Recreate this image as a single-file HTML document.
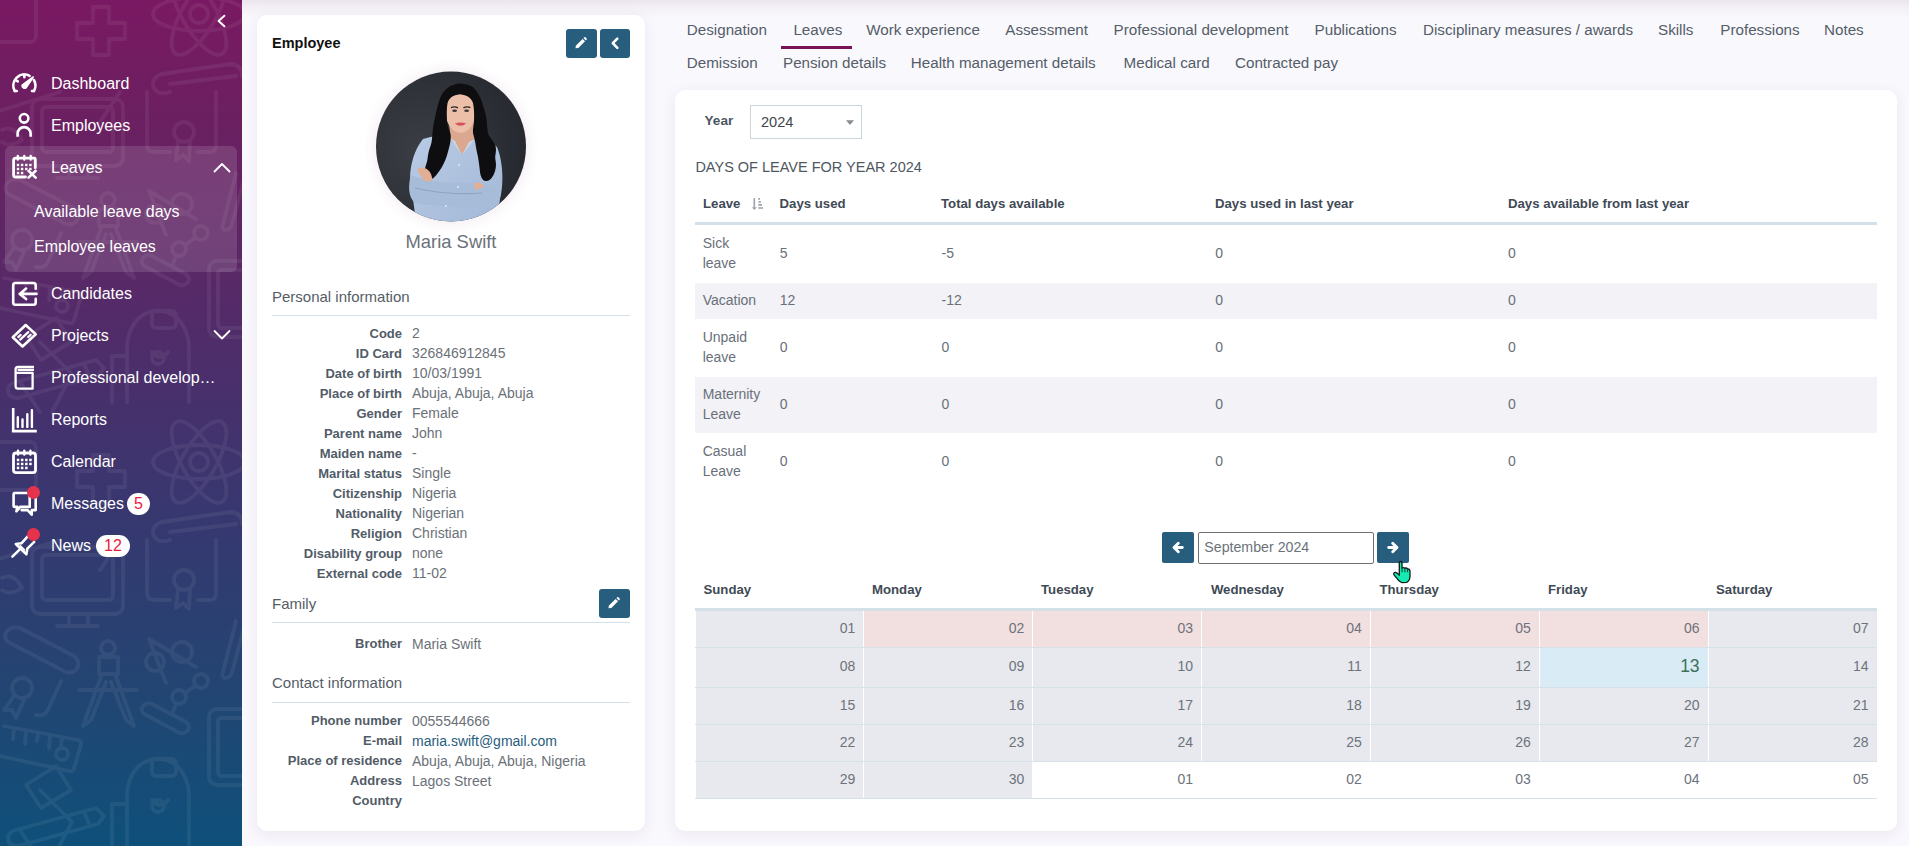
<!DOCTYPE html>
<html><head><meta charset="utf-8">
<style>
*{box-sizing:border-box;margin:0;padding:0}
html,body{width:1909px;height:846px;overflow:hidden;background:#f9f8fd;font-family:"Liberation Sans",sans-serif;position:relative}
.abs{position:absolute}
.t{position:absolute;white-space:nowrap;line-height:1}
/* sidebar */
#sb{position:absolute;left:0;top:0;width:242px;height:846px;background:linear-gradient(180deg,#7a1963 0%,#6c1f61 13%,#5c2766 30%,#47306c 47%,#363870 62%,#244472 80%,#0e507a 100%);overflow:hidden}
.nav{position:absolute;left:51px;color:#fff;font-size:16px;line-height:1;white-space:nowrap}
.ico{position:absolute;left:11px;width:27px;height:27px}
.ico svg{width:27px;height:27px;display:block}
.badge{position:absolute;background:#fff;color:#e8213f;border-radius:11px;height:22px;font-size:16px;line-height:22px;text-align:center}
.reddot{position:absolute;width:13px;height:13px;border-radius:50%;background:#e5334b}
/* cards */
.card{position:absolute;background:#fff;border-radius:10px;box-shadow:0 3px 14px rgba(100,50,110,0.085)}
.btn{position:absolute;background:#275d7d;border-radius:3px}
.lbl{position:absolute;right:0;width:130px;text-align:right;font-weight:700;font-size:13px;color:#525c68;line-height:1;white-space:nowrap}
.val{position:absolute;font-size:14px;color:#6b7178;line-height:1;white-space:nowrap}
.tab{position:absolute;font-size:15.2px;color:#545d68;line-height:1;white-space:nowrap}
.th{position:absolute;font-size:13.2px;font-weight:700;color:#3f4a55;line-height:1;white-space:nowrap}
.td{position:absolute;font-size:14px;color:#69707a;line-height:20px;white-space:nowrap}
.dn{position:absolute;font-size:14px;color:#6d737b;line-height:1;text-align:right;white-space:nowrap}
</style></head>
<body>
<!-- top shadow -->
<div class="abs" style="left:242px;top:0;width:1667px;height:18px;background:linear-gradient(180deg,#ebe5ed 0%,#f3f0f6 45%,#f9f8fd 100%)"></div>

<!-- SIDEBAR -->
<div id="sb"><svg class="abs" style="left:0;top:0" width="242" height="846" viewBox="0 0 242 846">

<g opacity="0.058"><g transform="translate(0 -336)" fill="none" stroke="#fff" stroke-width="3.8" stroke-linecap="round" stroke-linejoin="round">
<rect x="32" y="-13" width="91" height="67" rx="8"/><rect x="42" y="-5" width="71" height="45" rx="4"/>
<path d="M69 54 V66 M88 54 V66 M57 66 H98"/>
<path d="M147 -20 V33 Q147 40 154 40 H170 M198 40 H210 Q216 40 216 33 V-20"/><circle cx="184" cy="20" r="10"/><path d="M178 29 L176 48 L183 43 L189 49 L190 29"/>
<path d="M2 18 Q14 12 22 28 Q10 36 2 30"/>
<path d="M20 68 L74 96 Q82 103 76 110 Q70 115 62 110 L8 82 Q2 76 8 70 Q13 66 20 68 Z"/>
<circle cx="22" cy="128" r="10"/><path d="M14 136 L4 150 L12 150 L16 158 L24 140"/><path d="M61 121 L48 150 Q44 157 36 155"/>
<circle cx="108" cy="88" r="7"/><path d="M99 97 H118 V114 H99 Z M102 114 L83 166 L91 160 L106 122 M115 114 L134 166 L126 160 L111 122 M79 130 H137"/>
<circle cx="155" cy="102" r="9"/><circle cx="182" cy="92" r="10"/><path d="M149 79 L196 107 M166 123 L149 79"/>
<circle cx="201" cy="121" r="7"/><circle cx="179" cy="137" r="7"/><path d="M195 126 L185 133 M176 144 L172 154"/><path d="M152 144 L186 162 Q192 168 186 172 Q181 175 176 171 L144 154 Q139 149 144 145 Q148 142 152 144 Z"/>
<rect x="209" y="149" width="50" height="76" rx="8"/><rect x="218" y="158" width="40" height="58" rx="3"/>
<path d="M236 61 L223 112 Q221 118 226 118 Q230 118 232 112 L244 68"/>
<path d="M4 166 L78 180 Q82 181 81 185 L74 208 Q73 212 69 211 L0 196 M14 169 L13 179 M26 171 L25 184 M38 174 L37 181 M50 176 L49 188 M62 178 L61 185"/><circle cx="62" cy="194" r="6"/>
<path d="M56 206 L71 230 L41 248 L26 225 Z"/>
<path d="M140 205 Q158 192 176 205 Q190 218 189 240 V290 M127 290 V240 Q126 218 140 205"/><rect x="152" y="199" width="24" height="17" rx="4"/><path d="M127 244 H112 V290 M152 240 Q160 250 168 240"/><circle cx="158" cy="246" r="6"/>
<path d="M16 270 L96 248 L104 256 L98 264 L18 286 Q8 286 8 278 Q8 272 16 270 Z M84 252 L90 266"/>
<circle cx="199" cy="350" r="9"/><ellipse cx="199" cy="350" rx="46" ry="17" transform="rotate(60 199 350)"/><ellipse cx="199" cy="350" rx="46" ry="17" transform="rotate(-60 199 350)"/><ellipse cx="199" cy="350" rx="46" ry="17"/>
<path d="M93 343 H109 V359 H125 V375 H109 V391 H93 V375 H77 V359 H93 Z"/>
<rect x="-20" y="330" width="56" height="48" rx="6"/>
<path d="M162 410 L230 400 Q242 400 242 412 M170 420 L236 412 M162 410 Q150 414 154 424 Q158 432 170 428"/>
<path d="M40 230 L72 262 L52 300 M40 300 L20 270"/>
<path d="M-4 0 L60 -20 M120 -20 L100 10"/>
</g><g transform="translate(0 112)" fill="none" stroke="#fff" stroke-width="3.8" stroke-linecap="round" stroke-linejoin="round">
<rect x="32" y="-13" width="91" height="67" rx="8"/><rect x="42" y="-5" width="71" height="45" rx="4"/>
<path d="M69 54 V66 M88 54 V66 M57 66 H98"/>
<path d="M147 -20 V33 Q147 40 154 40 H170 M198 40 H210 Q216 40 216 33 V-20"/><circle cx="184" cy="20" r="10"/><path d="M178 29 L176 48 L183 43 L189 49 L190 29"/>
<path d="M2 18 Q14 12 22 28 Q10 36 2 30"/>
<path d="M20 68 L74 96 Q82 103 76 110 Q70 115 62 110 L8 82 Q2 76 8 70 Q13 66 20 68 Z"/>
<circle cx="22" cy="128" r="10"/><path d="M14 136 L4 150 L12 150 L16 158 L24 140"/><path d="M61 121 L48 150 Q44 157 36 155"/>
<circle cx="108" cy="88" r="7"/><path d="M99 97 H118 V114 H99 Z M102 114 L83 166 L91 160 L106 122 M115 114 L134 166 L126 160 L111 122 M79 130 H137"/>
<circle cx="155" cy="102" r="9"/><circle cx="182" cy="92" r="10"/><path d="M149 79 L196 107 M166 123 L149 79"/>
<circle cx="201" cy="121" r="7"/><circle cx="179" cy="137" r="7"/><path d="M195 126 L185 133 M176 144 L172 154"/><path d="M152 144 L186 162 Q192 168 186 172 Q181 175 176 171 L144 154 Q139 149 144 145 Q148 142 152 144 Z"/>
<rect x="209" y="149" width="50" height="76" rx="8"/><rect x="218" y="158" width="40" height="58" rx="3"/>
<path d="M236 61 L223 112 Q221 118 226 118 Q230 118 232 112 L244 68"/>
<path d="M4 166 L78 180 Q82 181 81 185 L74 208 Q73 212 69 211 L0 196 M14 169 L13 179 M26 171 L25 184 M38 174 L37 181 M50 176 L49 188 M62 178 L61 185"/><circle cx="62" cy="194" r="6"/>
<path d="M56 206 L71 230 L41 248 L26 225 Z"/>
<path d="M140 205 Q158 192 176 205 Q190 218 189 240 V290 M127 290 V240 Q126 218 140 205"/><rect x="152" y="199" width="24" height="17" rx="4"/><path d="M127 244 H112 V290 M152 240 Q160 250 168 240"/><circle cx="158" cy="246" r="6"/>
<path d="M16 270 L96 248 L104 256 L98 264 L18 286 Q8 286 8 278 Q8 272 16 270 Z M84 252 L90 266"/>
<circle cx="199" cy="350" r="9"/><ellipse cx="199" cy="350" rx="46" ry="17" transform="rotate(60 199 350)"/><ellipse cx="199" cy="350" rx="46" ry="17" transform="rotate(-60 199 350)"/><ellipse cx="199" cy="350" rx="46" ry="17"/>
<path d="M93 343 H109 V359 H125 V375 H109 V391 H93 V375 H77 V359 H93 Z"/>
<rect x="-20" y="330" width="56" height="48" rx="6"/>
<path d="M162 410 L230 400 Q242 400 242 412 M170 420 L236 412 M162 410 Q150 414 154 424 Q158 432 170 428"/>
<path d="M40 230 L72 262 L52 300 M40 300 L20 270"/>
<path d="M-4 0 L60 -20 M120 -20 L100 10"/>
</g><g transform="translate(0 560)" fill="none" stroke="#fff" stroke-width="3.8" stroke-linecap="round" stroke-linejoin="round">
<rect x="32" y="-13" width="91" height="67" rx="8"/><rect x="42" y="-5" width="71" height="45" rx="4"/>
<path d="M69 54 V66 M88 54 V66 M57 66 H98"/>
<path d="M147 -20 V33 Q147 40 154 40 H170 M198 40 H210 Q216 40 216 33 V-20"/><circle cx="184" cy="20" r="10"/><path d="M178 29 L176 48 L183 43 L189 49 L190 29"/>
<path d="M2 18 Q14 12 22 28 Q10 36 2 30"/>
<path d="M20 68 L74 96 Q82 103 76 110 Q70 115 62 110 L8 82 Q2 76 8 70 Q13 66 20 68 Z"/>
<circle cx="22" cy="128" r="10"/><path d="M14 136 L4 150 L12 150 L16 158 L24 140"/><path d="M61 121 L48 150 Q44 157 36 155"/>
<circle cx="108" cy="88" r="7"/><path d="M99 97 H118 V114 H99 Z M102 114 L83 166 L91 160 L106 122 M115 114 L134 166 L126 160 L111 122 M79 130 H137"/>
<circle cx="155" cy="102" r="9"/><circle cx="182" cy="92" r="10"/><path d="M149 79 L196 107 M166 123 L149 79"/>
<circle cx="201" cy="121" r="7"/><circle cx="179" cy="137" r="7"/><path d="M195 126 L185 133 M176 144 L172 154"/><path d="M152 144 L186 162 Q192 168 186 172 Q181 175 176 171 L144 154 Q139 149 144 145 Q148 142 152 144 Z"/>
<rect x="209" y="149" width="50" height="76" rx="8"/><rect x="218" y="158" width="40" height="58" rx="3"/>
<path d="M236 61 L223 112 Q221 118 226 118 Q230 118 232 112 L244 68"/>
<path d="M4 166 L78 180 Q82 181 81 185 L74 208 Q73 212 69 211 L0 196 M14 169 L13 179 M26 171 L25 184 M38 174 L37 181 M50 176 L49 188 M62 178 L61 185"/><circle cx="62" cy="194" r="6"/>
<path d="M56 206 L71 230 L41 248 L26 225 Z"/>
<path d="M140 205 Q158 192 176 205 Q190 218 189 240 V290 M127 290 V240 Q126 218 140 205"/><rect x="152" y="199" width="24" height="17" rx="4"/><path d="M127 244 H112 V290 M152 240 Q160 250 168 240"/><circle cx="158" cy="246" r="6"/>
<path d="M16 270 L96 248 L104 256 L98 264 L18 286 Q8 286 8 278 Q8 272 16 270 Z M84 252 L90 266"/>
<circle cx="199" cy="350" r="9"/><ellipse cx="199" cy="350" rx="46" ry="17" transform="rotate(60 199 350)"/><ellipse cx="199" cy="350" rx="46" ry="17" transform="rotate(-60 199 350)"/><ellipse cx="199" cy="350" rx="46" ry="17"/>
<path d="M93 343 H109 V359 H125 V375 H109 V391 H93 V375 H77 V359 H93 Z"/>
<rect x="-20" y="330" width="56" height="48" rx="6"/>
<path d="M162 410 L230 400 Q242 400 242 412 M170 420 L236 412 M162 410 Q150 414 154 424 Q158 432 170 428"/>
<path d="M40 230 L72 262 L52 300 M40 300 L20 270"/>
<path d="M-4 0 L60 -20 M120 -20 L100 10"/>
</g></g>
</svg>
<svg class="abs" style="left:210px;top:8px" width="24" height="26" viewBox="0 0 24 26"><path d="M14.4 7.7 L8.5 13 L14.4 18.3" fill="none" stroke="#fff" stroke-width="1.9" stroke-linecap="round" stroke-linejoin="round"/></svg>

<div class="abs" style="left:5px;top:146px;width:232px;height:126px;border-radius:6px;background:rgba(255,255,255,0.13)"></div>

<!-- dashboard -->
<svg class="abs" style="left:8px;top:68px" width="34" height="34" viewBox="0 0 34 34" fill="none" stroke="#fff" stroke-width="2.6" stroke-linecap="round" stroke-linejoin="round">
<path d="M6.75 23 A11.05 11.05 0 0 1 21.6 7.8"/><path d="M25.9 12 A11.05 11.05 0 0 1 25.95 23"/>
<path d="M6.75 23 H8.7 M25.95 23 H24 M16.35 6.6 V9.2 M7.9 12.4 L9.8 13.4"/>
<path d="M14.3 17.4 A2.3 2.3 0 0 0 17.9 19.6 L25 9.2 Z" fill="#fff" stroke-width="2"/>
</svg>
<!-- employees -->
<svg class="abs" style="left:8px;top:108px" width="34" height="34" viewBox="0 0 34 34" fill="none" stroke="#fff" stroke-width="2.6" stroke-linecap="round">
<circle cx="16.1" cy="10.35" r="4.3"/><path d="M9.6 28.7 V25.6 A6.5 6.5 0 0 1 22.6 25.6 V28.7" stroke-linecap="butt"/>
</svg>
<!-- leaves -->
<svg class="abs" style="left:8px;top:150px" width="34" height="34" viewBox="0 0 34 34" fill="none" stroke="#fff" stroke-width="2.8" stroke-linecap="round" stroke-linejoin="round">
<path d="M17.5 27 H7.5 Q5.6 27 5.6 25 V10 Q5.6 8.2 7.5 8.2 H26.4 Q27.3 8.2 27.3 10 V17.8"/>
<path d="M9.8 6 V9.5 M16.3 6 V9.5 M22.7 6 V9.5" stroke-width="2.4"/>
<path d="M20.5 20.8 L27.7 27.6 M27.7 20.8 L20.5 27.6" stroke-width="2.6"/>
<g fill="#fff" stroke="none"><rect x="8.8" y="13.8" width="2.4" height="2.4"/><rect x="12.9" y="13.8" width="2.4" height="2.4"/><rect x="17.1" y="13.8" width="2.4" height="2.4"/><rect x="21.2" y="13.8" width="2.4" height="2.4"/>
<rect x="8.8" y="17.8" width="2.4" height="2.4"/><rect x="12.9" y="17.8" width="2.4" height="2.4"/><rect x="17.1" y="17.8" width="2.4" height="2.4"/><rect x="21.2" y="17.8" width="2.4" height="2.4"/>
<rect x="8.8" y="21.8" width="2.4" height="2.4"/><rect x="12.9" y="21.8" width="2.4" height="2.4"/></g>
</svg>
<svg class="abs" style="left:205px;top:155px" width="34" height="24" viewBox="0 0 34 24"><path d="M9.5 16.5 L17 9 L24.5 16.5" fill="none" stroke="#fff" stroke-width="1.8" stroke-linecap="round" stroke-linejoin="round"/></svg>
<!-- candidates -->
<svg class="abs" style="left:8px;top:278px" width="34" height="34" viewBox="0 0 34 34" fill="none" stroke="#fff" stroke-width="2.6" stroke-linecap="round" stroke-linejoin="round">
<path d="M27.7 10.8 V7.2 Q27.7 5 25.5 5 H7.4 Q5.2 5 5.2 7.2 V24.5 Q5.2 26.7 7.4 26.7 H25.5 Q27.7 26.7 27.7 24.5 V20.9"/>
<path d="M11.7 15.9 H28.5 M18.1 10.6 L11.7 15.9 L18.1 21.1"/>
</svg>
<!-- projects -->
<svg class="abs" style="left:8px;top:318px" width="34" height="34" viewBox="0 0 34 34" fill="none" stroke="#fff" stroke-width="2.6" stroke-linecap="round" stroke-linejoin="round">
<path d="M17.7 7 L27.7 16.3 L14.5 28.5 L4.8 19.3 Z"/>
<path d="M10.2 19.1 L12.7 16.9 M12.2 21.6 L20.3 14.1 M20.2 19.1 L22.7 16.7" stroke-width="2.2"/>
</svg>
<!-- book -->
<svg class="abs" style="left:8px;top:360px" width="34" height="34" viewBox="0 0 34 34" fill="none" stroke="#fff" stroke-width="2.3" stroke-linejoin="round">
<path d="M26 7 H10 Q7.6 7 7.6 9.4 V26.3 Q7.6 28.7 10 28.7 H24.6 V12.9 H8.5"/>
<path d="M9.6 9.9 H26"/>
</svg>
<!-- reports -->
<svg class="abs" style="left:8px;top:403px" width="34" height="34" viewBox="0 0 34 34" fill="none" stroke="#fff" stroke-width="2.6" stroke-linecap="butt" stroke-linejoin="miter">
<path d="M5.2 5 V28.1 H28.8"/>
<path d="M9.8 14.2 V23.9 M14.5 16.4 V23.9 M19.3 11.2 V23.9 M23.9 7.2 V23.9" stroke-linecap="round" stroke-width="2.4"/>
</svg>
<!-- calendar -->
<svg class="abs" style="left:8px;top:445px" width="34" height="34" viewBox="0 0 34 34" fill="none" stroke="#fff" stroke-width="2.8" stroke-linecap="round" stroke-linejoin="round">
<rect x="5.5" y="8" width="22" height="19.6" rx="2.6"/>
<path d="M10 5.6 V9.6 M16.3 5.6 V9.6 M22.4 5.6 V9.6" stroke-width="2.4"/>
<g fill="#fff" stroke="none"><rect x="8.8" y="13.7" width="2.5" height="2.5"/><rect x="12.9" y="13.7" width="2.5" height="2.5"/><rect x="17.1" y="13.7" width="2.5" height="2.5"/><rect x="21.2" y="13.7" width="2.5" height="2.5"/>
<rect x="8.8" y="17.7" width="2.5" height="2.5"/><rect x="12.9" y="17.7" width="2.5" height="2.5"/><rect x="17.1" y="17.7" width="2.5" height="2.5"/><rect x="21.2" y="17.7" width="2.5" height="2.5"/>
<rect x="8.8" y="21.7" width="2.5" height="2.5"/><rect x="12.9" y="21.7" width="2.5" height="2.5"/><rect x="17.1" y="21.7" width="2.5" height="2.5"/></g>
</svg>
<!-- messages -->
<svg class="abs" style="left:8px;top:486px" width="34" height="34" viewBox="0 0 34 34" fill="none" stroke="#fff" stroke-width="2.6" stroke-linecap="round" stroke-linejoin="round">
<path d="M21.7 7 H6.8 Q5.6 7 5.6 8.2 V19.7 Q5.6 20.9 6.8 20.9 H9.4 L8.4 25.3 L12.2 20.9 H21.7 Z"/>
<path d="M27.7 11.5 V24.1 H23.8 L23.7 28.7 L19.6 24.1 H13.6"/>
</svg>
<div class="reddot" style="left:27.2px;top:486.3px;width:13px;height:13px"></div>
<!-- news -->
<svg class="abs" style="left:8px;top:527px" width="34" height="34" viewBox="0 0 34 34" fill="none" stroke="#fff" stroke-width="2.5" stroke-linecap="round" stroke-linejoin="round">
<path d="M4.4 29.7 L11.5 22.6"/>
<path d="M7.8 17 L18.4 27.4 L19.3 21.7 L26.2 14.8 M7.8 17 L13.4 16.3 L19.5 9.6"/>
<path d="M12.3 18.8 L16.4 22.9" stroke-width="1.8"/>
</svg>
<div class="reddot" style="left:27.2px;top:527.8px;width:13px;height:13px"></div>

<div class="nav" style="top:76px">Dashboard</div>
<div class="nav" style="top:118px">Employees</div>
<div class="nav" style="top:160px">Leaves</div>
<div class="nav" style="left:34px;top:204px">Available leave days</div>
<div class="nav" style="left:34px;top:238.7px">Employee leaves</div>
<div class="nav" style="top:286px">Candidates</div>
<div class="nav" style="top:328px">Projects</div>
<svg class="abs" style="left:205px;top:323px" width="34" height="24" viewBox="0 0 34 24"><path d="M9.5 8 L17 15.5 L24.5 8" fill="none" stroke="#fff" stroke-width="1.8" stroke-linecap="round" stroke-linejoin="round"/></svg>
<div class="nav" style="top:370px;width:166px;overflow:hidden;text-overflow:ellipsis">Professional development</div>
<div class="nav" style="top:412px">Reports</div>
<div class="nav" style="top:454px">Calendar</div>
<div class="nav" style="top:496px">Messages</div>
<div class="badge" style="left:127px;top:493px;width:23px">5</div>
<div class="nav" style="top:538px">News</div>
<div class="badge" style="left:96px;top:535px;width:34px">12</div>
</div>

<!-- EMPLOYEE CARD -->
<div class="card" style="left:257px;top:15px;width:388px;height:816px"></div>

<div class="t" style="left:272px;top:35.7px;font-size:14.5px;font-weight:700;color:#111">Employee</div>
<div class="btn" style="left:566px;top:29px;width:31px;height:29px"><svg width="31" height="29" viewBox="0 0 31 29"><path d="M9.4 19.3 L10 16.5 L16.6 9.9 L19 12.3 L12.4 18.9 Z" fill="#fff"/><path d="M17.4 9.1 L18.3 8.2 Q18.9 7.7 19.5 8.2 L20.7 9.4 Q21.2 10 20.7 10.6 L19.8 11.5 Z" fill="#fff"/></svg></div>
<div class="btn" style="left:600px;top:29px;width:30px;height:29px"><svg width="30" height="29" viewBox="0 0 30 29"><path d="M17.3 9.6 L12.8 14.2 L17.3 18.8" fill="none" stroke="#fff" stroke-width="2.6" stroke-linecap="round" stroke-linejoin="round"/></svg></div>

<!-- avatar -->
<div class="abs" style="left:376px;top:71.5px;width:150px;height:150px;border-radius:50%;box-shadow:0 0 14px rgba(150,70,130,0.14)"></div>
<svg class="abs" style="left:371px;top:67px" width="160" height="160" viewBox="0 0 160 160">
<defs><clipPath id="cc"><circle cx="80" cy="79.5" r="75"/></clipPath>
<radialGradient id="bg" cx="0.3" cy="0.5" r="0.75"><stop offset="0" stop-color="#3b3d45"/><stop offset="0.6" stop-color="#2e3038"/><stop offset="1" stop-color="#24262d"/></radialGradient>
<linearGradient id="sh" x1="0" y1="0" x2="1" y2="1"><stop offset="0" stop-color="#b9cbe5"/><stop offset="1" stop-color="#a2b8d7"/></linearGradient></defs>
<g clip-path="url(#cc)">
<rect width="160" height="160" fill="url(#bg)"/>
<path d="M52 72 C62 69 72 68 82 67 L101 68 C111 71 120 74 126 80 C132 94 133 116 129 132 L125 162 L46 162 L42 132 C36 114 39 88 52 72 Z" fill="url(#sh)"/>
<path d="M77.5 52 L103.5 52 L103 73 L91 87 L80 73 Z" fill="#dba88f"/>
<path d="M79 71 L91 88 L84 74 Z M104 72 L91 88 L98 75 Z" fill="#c8d7eb"/>
<ellipse cx="89.5" cy="45" rx="15" ry="20" fill="#ecbfa8"/><ellipse cx="89.5" cy="47.5" rx="13.6" ry="18.5" fill="#ecbfa8"/>
<path d="M80 40.6 Q83.5 39 87 40.8 M92.4 40.8 Q95.9 39 99.4 40.6" stroke="#2e2626" stroke-width="1.4" fill="none"/>
<ellipse cx="83.6" cy="43.8" rx="2.4" ry="1.3" fill="#3d3a3c"/><ellipse cx="95.6" cy="43.8" rx="2.4" ry="1.3" fill="#3d3a3c"/>
<path d="M83.8 56.4 Q89.5 54.6 95.2 56.4 Q89.5 61 83.8 56.4 Z" fill="#d6505f"/>
<path d="M88 16.4 C93 16.5 98 17.5 102 20 C106 24 109 29 111 35 C113 42 115 47 115.5 52 C116 58 116.5 63 117 66 C118 70 122 73 124.5 79 C126 85 123.5 88 124.5 93 C125.5 98 125 103 122.5 108 C120.5 112 117.5 114.5 114 114 C111 113 109.5 109 109 105 C108.5 100 108 96 107 90 C106 85 105 81 104.5 77 C104 74 103 70 102 66 C101.5 62 102.8 58 103 54 C103.3 48 103.2 42 102 36 C100.5 31 96 28 89 27.2 C82 28 78 31 76.5 36 C75.5 42 75.8 48 76 54 C76.5 59 78 63 79.5 67 C80.2 70 79.5 76 78 81 C76.5 87 75 92 72.5 97 C70 102 66 108 62 111.5 C58.5 113 55 111 54 106 C53 101 56 97 56.5 92 C57 88 57.5 84 59.5 79 C61 75 61 71 61.5 66 C62 60 63 54 64.5 48 C66 42 67 36 70 29 C73 23 78 18 88 16.4 Z" fill="#0e0e11"/>
<path d="M40 108 C50 113 70 116 96 116 C110 116 122 118 129 123 C131 131 127 138 119 141 C98 142 70 140 44 136 C37 130 37 118 40 108 Z" fill="#a7bcd9"/>
<path d="M44 121 C60 125 86 128 111 126" stroke="#8ca4c6" stroke-width="1.1" fill="none"/>
<path d="M46 103 C50 98 57 101 60 107 L62 114 L53 114 Z" fill="#e2ae96"/>
<path d="M103 117 C107 114 112 116 113 120 L104 123 Z" fill="#e2ae96"/>
<circle cx="88" cy="98" r="0.9" fill="#e6eef8"/><circle cx="87" cy="120" r="0.9" fill="#e6eef8"/><circle cx="75" cy="139" r="0.9" fill="#e6eef8"/>
</g>
</svg>

<div class="t" style="left:351px;width:200px;text-align:center;top:233.4px;font-size:18.4px;color:#6a727a">Maria Swift</div>

<div class="t" style="left:272px;top:288.6px;font-size:15px;color:#555d66">Personal information</div>
<div class="abs" style="left:272px;top:315px;width:358px;height:1px;background:#d5e1e8"></div>
<div class="lbl" style="left:252px;top:326.9px;width:150px">Code</div>
<div class="val" style="left:412px;top:326.0px;color:#6b7178">2</div>
<div class="lbl" style="left:252px;top:346.9px;width:150px">ID Card</div>
<div class="val" style="left:412px;top:346.0px;color:#6b7178">326846912845</div>
<div class="lbl" style="left:252px;top:366.9px;width:150px">Date of birth</div>
<div class="val" style="left:412px;top:366.0px;color:#6b7178">10/03/1991</div>
<div class="lbl" style="left:252px;top:386.9px;width:150px">Place of birth</div>
<div class="val" style="left:412px;top:386.0px;color:#6b7178">Abuja, Abuja, Abuja</div>
<div class="lbl" style="left:252px;top:406.9px;width:150px">Gender</div>
<div class="val" style="left:412px;top:406.0px;color:#6b7178">Female</div>
<div class="lbl" style="left:252px;top:426.9px;width:150px">Parent name</div>
<div class="val" style="left:412px;top:426.0px;color:#6b7178">John</div>
<div class="lbl" style="left:252px;top:446.9px;width:150px">Maiden name</div>
<div class="val" style="left:412px;top:446.0px;color:#6b7178">-</div>
<div class="lbl" style="left:252px;top:466.9px;width:150px">Marital status</div>
<div class="val" style="left:412px;top:466.0px;color:#6b7178">Single</div>
<div class="lbl" style="left:252px;top:486.9px;width:150px">Citizenship</div>
<div class="val" style="left:412px;top:486.0px;color:#6b7178">Nigeria</div>
<div class="lbl" style="left:252px;top:506.9px;width:150px">Nationality</div>
<div class="val" style="left:412px;top:506.0px;color:#6b7178">Nigerian</div>
<div class="lbl" style="left:252px;top:526.9px;width:150px">Religion</div>
<div class="val" style="left:412px;top:526.0px;color:#6b7178">Christian</div>
<div class="lbl" style="left:252px;top:546.9px;width:150px">Disability group</div>
<div class="val" style="left:412px;top:546.0px;color:#6b7178">none</div>
<div class="lbl" style="left:252px;top:566.9px;width:150px">External code</div>
<div class="val" style="left:412px;top:566.0px;color:#6b7178">11-02</div>

<div class="t" style="left:272px;top:595.5px;font-size:15px;color:#555d66">Family</div>
<div class="btn" style="left:599px;top:589px;width:31px;height:29px"><svg width="31" height="29" viewBox="0 0 31 29"><path d="M9.4 19.3 L10 16.5 L16.6 9.9 L19 12.3 L12.4 18.9 Z" fill="#fff"/><path d="M17.4 9.1 L18.3 8.2 Q18.9 7.7 19.5 8.2 L20.7 9.4 Q21.2 10 20.7 10.6 L19.8 11.5 Z" fill="#fff"/></svg></div>
<div class="abs" style="left:272px;top:622px;width:358px;height:1px;background:#d5e1e8"></div>
<div class="lbl" style="left:252px;top:637.4px;width:150px">Brother</div>
<div class="val" style="left:412px;top:636.5px;color:#6b7178">Maria Swift</div>

<div class="t" style="left:272px;top:675.3px;font-size:15px;color:#555d66">Contact information</div>
<div class="abs" style="left:272px;top:702px;width:358px;height:1px;background:#d5e1e8"></div>
<div class="lbl" style="left:252px;top:714.4px;width:150px">Phone number</div>
<div class="val" style="left:412px;top:713.5px;color:#6b7178">0055544666</div>
<div class="lbl" style="left:252px;top:734.4px;width:150px">E-mail</div>
<div class="val" style="left:412px;top:733.5px;color:#275d7d">maria.swift@gmail.com</div>
<div class="lbl" style="left:252px;top:754.4px;width:150px">Place of residence</div>
<div class="val" style="left:412px;top:753.5px;color:#6b7178">Abuja, Abuja, Abuja, Nigeria</div>
<div class="lbl" style="left:252px;top:774.4px;width:150px">Address</div>
<div class="val" style="left:412px;top:773.5px;color:#6b7178">Lagos Street</div>
<div class="lbl" style="left:252px;top:794.4px;width:150px">Country</div>


<!-- TABS -->
<div class="tab" style="left:686.8px;top:22.2px">Designation</div>
<div class="tab" style="left:793.4px;top:22.2px">Leaves</div>
<div class="tab" style="left:866.2px;top:22.2px">Work experience</div>
<div class="tab" style="left:1005.3px;top:22.2px">Assessment</div>
<div class="tab" style="left:1113.6px;top:22.2px">Professional development</div>
<div class="tab" style="left:1314.6px;top:22.2px">Publications</div>
<div class="tab" style="left:1423px;top:22.2px">Disciplinary measures / awards</div>
<div class="tab" style="left:1658px;top:22.2px">Skills</div>
<div class="tab" style="left:1720.3px;top:22.2px">Professions</div>
<div class="tab" style="left:1824px;top:22.2px">Notes</div>
<div class="tab" style="left:686.8px;top:55px">Demission</div>
<div class="tab" style="left:783px;top:55px">Pension details</div>
<div class="tab" style="left:910.8px;top:55px">Health management details</div>
<div class="tab" style="left:1123.6px;top:55px">Medical card</div>
<div class="tab" style="left:1235px;top:55px">Contracted pay</div>
<div class="abs" style="left:781px;top:46px;width:71px;height:3px;background:#7a1157"></div>

<!-- MAIN CARD -->
<div class="card" style="left:675px;top:90px;width:1222px;height:741px"></div>
<div class="th" style="left:704.5px;top:113.8px;font-size:13.6px;color:#4d5762">Year</div>
<div class="abs" style="left:750px;top:105px;width:112px;height:34px;border:1px solid #c9d6dc;background:#fff"></div>
<div class="td" style="left:761px;top:114.8px;line-height:1;color:#3f464d;font-size:14.6px">2024</div>
<svg class="abs" style="left:844px;top:118px" width="12" height="9" viewBox="0 0 12 9"><path d="M2 2.2 H10 L6 7 Z" fill="#888c91"/></svg>
<div class="t" style="left:695.4px;top:159.9px;color:#4f5760;font-size:14.5px">DAYS OF LEAVE FOR YEAR 2024</div>
<div class="th" style="left:703px;top:196.5px;">Leave</div>
<div class="th" style="left:779.6px;top:196.5px;">Days used</div>
<div class="th" style="left:941px;top:196.5px;">Total days available</div>
<div class="th" style="left:1215px;top:196.5px;">Days used in last year</div>
<div class="th" style="left:1508px;top:196.5px;">Days available from last year</div>
<svg class="abs" style="left:750px;top:196px" width="15" height="15" viewBox="0 0 15 15"><path d="M4.3 2.1 V11.5" stroke="#9ca2a8" stroke-width="1.6"/><path d="M1.8 11.2 H6.9 L4.35 13.9 Z" fill="#9ca2a8"/><path d="M8.3 2.9 H10 M8.3 6 H11 M8.3 8.9 H12 M8.3 12 H13.1" stroke="#9ca2a8" stroke-width="1.6"/></svg>
<div class="abs" style="left:695px;top:222px;width:1182px;height:3px;background:#d3e0e7"></div>
<div class="td" style="left:702.7px;top:235.6px;line-height:1">Sick</div>
<div class="td" style="left:702.7px;top:255.8px;line-height:1">leave</div>
<div class="td" style="left:779.7px;top:246.4px;line-height:1">5</div>
<div class="td" style="left:941.5px;top:246.4px;line-height:1">-5</div>
<div class="td" style="left:1215.3px;top:246.4px;line-height:1">0</div>
<div class="td" style="left:1508px;top:246.4px;line-height:1">0</div>
<div class="abs" style="left:695px;top:283px;width:1182px;height:36px;background:#f2f2f7"></div>
<div class="td" style="left:702.7px;top:292.8px;line-height:1">Vacation</div>
<div class="td" style="left:779.7px;top:292.8px;line-height:1">12</div>
<div class="td" style="left:941.5px;top:292.8px;line-height:1">-12</div>
<div class="td" style="left:1215.3px;top:292.8px;line-height:1">0</div>
<div class="td" style="left:1508px;top:292.8px;line-height:1">0</div>
<div class="td" style="left:702.7px;top:330.3px;line-height:1">Unpaid</div>
<div class="td" style="left:702.7px;top:349.7px;line-height:1">leave</div>
<div class="td" style="left:779.7px;top:340.3px;line-height:1">0</div>
<div class="td" style="left:941.5px;top:340.3px;line-height:1">0</div>
<div class="td" style="left:1215.3px;top:340.3px;line-height:1">0</div>
<div class="td" style="left:1508px;top:340.3px;line-height:1">0</div>
<div class="abs" style="left:695px;top:377px;width:1182px;height:56px;background:#f2f2f7"></div>
<div class="td" style="left:702.7px;top:387.1px;line-height:1">Maternity</div>
<div class="td" style="left:702.7px;top:406.9px;line-height:1">Leave</div>
<div class="td" style="left:779.7px;top:396.7px;line-height:1">0</div>
<div class="td" style="left:941.5px;top:396.7px;line-height:1">0</div>
<div class="td" style="left:1215.3px;top:396.7px;line-height:1">0</div>
<div class="td" style="left:1508px;top:396.7px;line-height:1">0</div>
<div class="td" style="left:702.7px;top:444.0px;line-height:1">Casual</div>
<div class="td" style="left:702.7px;top:463.7px;line-height:1">Leave</div>
<div class="td" style="left:779.7px;top:454.1px;line-height:1">0</div>
<div class="td" style="left:941.5px;top:454.1px;line-height:1">0</div>
<div class="td" style="left:1215.3px;top:454.1px;line-height:1">0</div>
<div class="td" style="left:1508px;top:454.1px;line-height:1">0</div>
<div class="btn" style="left:1162px;top:532px;width:32px;height:31px;border-radius:2px"><svg width="32" height="31" viewBox="0 0 32 31"><path d="M20.3 15.5 H13 M16.3 11.3 L12 15.5 L16.3 19.7" fill="none" stroke="#fff" stroke-width="2.9" stroke-linecap="round" stroke-linejoin="round"/></svg></div>
<div class="abs" style="left:1198px;top:532px;width:176px;height:32px;border:1px solid #707070;border-radius:2px;background:#fff"></div>
<div class="td" style="left:1204.3px;top:540.2px;line-height:1;font-size:14.2px;color:#6c7279">September 2024</div>
<div class="btn" style="left:1377px;top:532px;width:32px;height:31px;border-radius:2px"><svg width="32" height="31" viewBox="0 0 32 31"><path d="M11.7 15.5 H19 M15.7 11.3 L20 15.5 L15.7 19.7" fill="none" stroke="#fff" stroke-width="2.9" stroke-linecap="round" stroke-linejoin="round"/></svg></div>
<div class="th" style="left:703.5px;top:582.8px;">Sunday</div>
<div class="th" style="left:872px;top:582.8px;">Monday</div>
<div class="th" style="left:1041px;top:582.8px;">Tuesday</div>
<div class="th" style="left:1210.9px;top:582.8px;">Wednesday</div>
<div class="th" style="left:1379.5px;top:582.8px;">Thursday</div>
<div class="th" style="left:1548px;top:582.8px;">Friday</div>
<div class="th" style="left:1716px;top:582.8px;">Saturday</div>
<div class="abs" style="left:695px;top:608px;width:1182px;height:3px;background:#d3e0e7"></div>
<div class="abs" style="left:696px;top:611px;width:167px;height:36px;background:#e8e9ee"></div>
<div class="dn" style="right:1053.6px;top:621.1px">01</div>
<div class="abs" style="left:864px;top:611px;width:168px;height:36px;background:#f2dfe0"></div>
<div class="dn" style="right:884.8px;top:621.1px">02</div>
<div class="abs" style="left:1033px;top:611px;width:168px;height:36px;background:#f2dfe0"></div>
<div class="dn" style="right:715.9px;top:621.1px">03</div>
<div class="abs" style="left:1202px;top:611px;width:168px;height:36px;background:#f2dfe0"></div>
<div class="dn" style="right:547.1px;top:621.1px">04</div>
<div class="abs" style="left:1371px;top:611px;width:168px;height:36px;background:#f2dfe0"></div>
<div class="dn" style="right:378.2px;top:621.1px">05</div>
<div class="abs" style="left:1540px;top:611px;width:168px;height:36px;background:#f2dfe0"></div>
<div class="dn" style="right:209.4px;top:621.1px">06</div>
<div class="abs" style="left:1709px;top:611px;width:168px;height:36px;background:#e8e9ee"></div>
<div class="dn" style="right:40.5px;top:621.1px">07</div>
<div class="abs" style="left:696px;top:648px;width:167px;height:39px;background:#e8e9ee"></div>
<div class="dn" style="right:1053.6px;top:659.3px">08</div>
<div class="abs" style="left:864px;top:648px;width:168px;height:39px;background:#e8e9ee"></div>
<div class="dn" style="right:884.8px;top:659.3px">09</div>
<div class="abs" style="left:1033px;top:648px;width:168px;height:39px;background:#e8e9ee"></div>
<div class="dn" style="right:715.9px;top:659.3px">10</div>
<div class="abs" style="left:1202px;top:648px;width:168px;height:39px;background:#e8e9ee"></div>
<div class="dn" style="right:547.1px;top:659.3px">11</div>
<div class="abs" style="left:1371px;top:648px;width:168px;height:39px;background:#e8e9ee"></div>
<div class="dn" style="right:378.2px;top:659.3px">12</div>
<div class="abs" style="left:1540px;top:648px;width:168px;height:39px;background:#d9ebf5"></div>
<div class="dn" style="right:209.4px;top:657.9px;font-size:17.5px;color:#3e6e5c">13</div>
<div class="abs" style="left:1709px;top:648px;width:168px;height:39px;background:#e8e9ee"></div>
<div class="dn" style="right:40.5px;top:659.3px">14</div>
<div class="abs" style="left:696px;top:688px;width:167px;height:36px;background:#e8e9ee"></div>
<div class="dn" style="right:1053.6px;top:698.0px">15</div>
<div class="abs" style="left:864px;top:688px;width:168px;height:36px;background:#e8e9ee"></div>
<div class="dn" style="right:884.8px;top:698.0px">16</div>
<div class="abs" style="left:1033px;top:688px;width:168px;height:36px;background:#e8e9ee"></div>
<div class="dn" style="right:715.9px;top:698.0px">17</div>
<div class="abs" style="left:1202px;top:688px;width:168px;height:36px;background:#e8e9ee"></div>
<div class="dn" style="right:547.1px;top:698.0px">18</div>
<div class="abs" style="left:1371px;top:688px;width:168px;height:36px;background:#e8e9ee"></div>
<div class="dn" style="right:378.2px;top:698.0px">19</div>
<div class="abs" style="left:1540px;top:688px;width:168px;height:36px;background:#e8e9ee"></div>
<div class="dn" style="right:209.4px;top:698.0px">20</div>
<div class="abs" style="left:1709px;top:688px;width:168px;height:36px;background:#e8e9ee"></div>
<div class="dn" style="right:40.5px;top:698.0px">21</div>
<div class="abs" style="left:696px;top:725px;width:167px;height:36px;background:#e8e9ee"></div>
<div class="dn" style="right:1053.6px;top:735.0px">22</div>
<div class="abs" style="left:864px;top:725px;width:168px;height:36px;background:#e8e9ee"></div>
<div class="dn" style="right:884.8px;top:735.0px">23</div>
<div class="abs" style="left:1033px;top:725px;width:168px;height:36px;background:#e8e9ee"></div>
<div class="dn" style="right:715.9px;top:735.0px">24</div>
<div class="abs" style="left:1202px;top:725px;width:168px;height:36px;background:#e8e9ee"></div>
<div class="dn" style="right:547.1px;top:735.0px">25</div>
<div class="abs" style="left:1371px;top:725px;width:168px;height:36px;background:#e8e9ee"></div>
<div class="dn" style="right:378.2px;top:735.0px">26</div>
<div class="abs" style="left:1540px;top:725px;width:168px;height:36px;background:#e8e9ee"></div>
<div class="dn" style="right:209.4px;top:735.0px">27</div>
<div class="abs" style="left:1709px;top:725px;width:168px;height:36px;background:#e8e9ee"></div>
<div class="dn" style="right:40.5px;top:735.0px">28</div>
<div class="abs" style="left:696px;top:762px;width:167px;height:36px;background:#e8e9ee"></div>
<div class="dn" style="right:1053.6px;top:771.7px">29</div>
<div class="abs" style="left:864px;top:762px;width:168px;height:36px;background:#e8e9ee"></div>
<div class="dn" style="right:884.8px;top:771.7px">30</div>
<div class="abs" style="left:1033px;top:762px;width:168px;height:36px;background:#ffffff"></div>
<div class="dn" style="right:715.9px;top:771.7px">01</div>
<div class="abs" style="left:1202px;top:762px;width:168px;height:36px;background:#ffffff"></div>
<div class="dn" style="right:547.1px;top:771.7px">02</div>
<div class="abs" style="left:1371px;top:762px;width:168px;height:36px;background:#ffffff"></div>
<div class="dn" style="right:378.2px;top:771.7px">03</div>
<div class="abs" style="left:1540px;top:762px;width:168px;height:36px;background:#ffffff"></div>
<div class="dn" style="right:209.4px;top:771.7px">04</div>
<div class="abs" style="left:1709px;top:762px;width:168px;height:36px;background:#ffffff"></div>
<div class="dn" style="right:40.5px;top:771.7px">05</div>
<div class="abs" style="left:695px;top:647px;width:1182px;height:1px;background:#d7e2e8"></div>
<div class="abs" style="left:695px;top:687px;width:1182px;height:1px;background:#d7e2e8"></div>
<div class="abs" style="left:695px;top:724px;width:1182px;height:1px;background:#d7e2e8"></div>
<div class="abs" style="left:695px;top:761px;width:1182px;height:1px;background:#d7e2e8"></div>
<div class="abs" style="left:695px;top:798px;width:1182px;height:1px;background:#d7e2e8"></div>
<svg class="abs" style="left:1388px;top:557px" width="26" height="28" viewBox="0 0 26 28"><path d="M11.3 5.6 Q12.6 3.4 14 5.6 L14 11 Q15.6 10 16.9 11.2 Q18.6 10.5 19.6 12 Q21.6 11.8 22 13.8 L22 19.5 Q21.6 24 18.6 25.4 L14.2 25.6 Q12 25.2 10.6 23.4 L6 17.8 Q5.2 15.8 7 15.4 Q8.6 15 11.3 18.2 Z" fill="#14eab2" stroke="#0a1a16" stroke-width="1.3" stroke-linejoin="round"/><path d="M14 11.2 V15.2 M16.9 11.5 V15.2 M19.6 12.3 V15.2" stroke="#0a1a16" stroke-width="0.9"/></svg>

</body></html>
